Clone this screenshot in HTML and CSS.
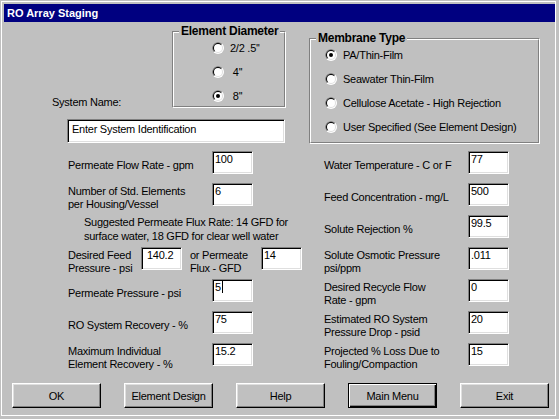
FILE: index.html
```html
<!DOCTYPE html>
<html>
<head>
<meta charset="utf-8">
<link rel="stylesheet" href="styles.css">
</head>
<body>
<svg class="defs" width="0" height="0">
  <symbol id="radio" viewBox="0 0 12 12">
    <circle cx="6" cy="6" r="6" fill="#fff"/>
    <path d="M1.757 10.243A6 6 0 0 1 10.243 1.757Z" fill="#808080"/>
    <circle cx="6" cy="6" r="5" fill="#dfdfdf"/>
    <path d="M2.464 9.536A5 5 0 0 1 9.536 2.464Z" fill="#000"/>
    <circle cx="6" cy="6" r="4" fill="#fff"/>
  </symbol>
  <symbol id="radio-on" viewBox="0 0 12 12">
    <use href="#radio"/>
    <circle cx="6" cy="6" r="2" fill="#000"/>
  </symbol>
</svg>
<div class="window">
  <div class="frame">
    <div class="titlebar">RO Array Staging</div>

    <div class="top">
      <div class="top-left">
        <div class="name-row">
          <div class="name-label">System Name:</div>
          <div class="group group-dia">
            <div class="group-in">
              <div class="legend">Element Diameter</div>
              <div class="opt opt-dia"><svg class="radio"><use href="#radio"/></svg><span>2/2 .5''</span></div>
              <div class="opt opt-dia"><svg class="radio"><use href="#radio"/></svg><span>&nbsp;4''</span></div>
              <div class="opt opt-dia"><svg class="radio"><use href="#radio-on"/></svg><span>&nbsp;8''</span></div>
            </div>
          </div>
        </div>
        <div class="edit edit-name">Enter System Identification</div>
      </div>
      <div class="group group-mem">
        <div class="group-in">
          <div class="legend">Membrane Type</div>
          <div class="opt opt-mem"><svg class="radio"><use href="#radio-on"/></svg><span>PA/Thin-Film</span></div>
          <div class="opt opt-mem"><svg class="radio"><use href="#radio"/></svg><span>Seawater Thin-Film</span></div>
          <div class="opt opt-mem"><svg class="radio"><use href="#radio"/></svg><span>Cellulose Acetate - High Rejection</span></div>
          <div class="opt opt-mem"><svg class="radio"><use href="#radio"/></svg><span>User Specified (See Element Design)</span></div>
        </div>
      </div>
    </div>

    <div class="fields">
      <div class="col col-left">
        <div class="row"><div class="lbl">Permeate Flow Rate - gpm</div><div class="edit">100</div></div>
        <div class="row"><div class="lbl">Number of Std. Elements<br>per Housing/Vessel</div><div class="edit">6</div></div>
        <div class="note">Suggested Permeate Flux Rate: 14 GFD for<br>surface water, 18 GFD for clear well water</div>
        <div class="row">
          <div class="lbl lbl-feed">Desired Feed<br>Pressure - psi</div><div class="edit edit-indent">140.2</div>
          <div class="lbl lbl-or">or Permeate<br>Flux - GFD</div><div class="edit">14</div>
        </div>
        <div class="row"><div class="lbl">Permeate Pressure - psi</div><div class="edit">5<span class="caret"></span></div></div>
        <div class="row"><div class="lbl">RO System Recovery - %</div><div class="edit">75</div></div>
        <div class="row"><div class="lbl">Maximum Individual<br>Element Recovery - %</div><div class="edit">15.2</div></div>
      </div>
      <div class="col col-right">
        <div class="row"><div class="lbl">Water Temperature - C or F</div><div class="edit">77</div></div>
        <div class="row"><div class="lbl">Feed Concentration - mg/L</div><div class="edit">500</div></div>
        <div class="row"><div class="lbl">Solute Rejection %</div><div class="edit">99.5</div></div>
        <div class="row"><div class="lbl">Solute Osmotic Pressure<br>psi/ppm</div><div class="edit">.011</div></div>
        <div class="row"><div class="lbl">Desired Recycle Flow<br>Rate - gpm</div><div class="edit">0</div></div>
        <div class="row"><div class="lbl">Estimated RO System<br>Pressure Drop - psid</div><div class="edit">20</div></div>
        <div class="row"><div class="lbl">Projected % Loss Due to<br>Fouling/Compaction</div><div class="edit">15</div></div>
      </div>
    </div>

    <div class="buttons">
      <button class="btn">OK</button>
      <button class="btn">Element Design</button>
      <button class="btn">Help</button>
      <button class="btn btn-default">Main Menu</button>
      <button class="btn">Exit</button>
    </div>
  </div>
</div>
</body>
</html>
```
FILE: styles.css
```css
html, body {
  margin: 0;
  padding: 0;
  background: #c0c0c0;
}
body {
  font-family: "Liberation Sans", Arial, sans-serif;
  font-size: 11px;
  letter-spacing: -0.25px;
  color: #000;
}
.defs {
  position: absolute;
  width: 0;
  height: 0;
  overflow: hidden;
}
.window {
  width: 559px;
  height: 419px;
  box-sizing: border-box;
  padding: 1px 3px 3px 1px;
  background: #c0c0c0;
}
.frame {
  height: 100%;
  box-sizing: border-box;
  border: 1px solid #fff;
  padding: 2px 0 0 2px;
}
.titlebar {
  height: 18px;
  line-height: 18px;
  background: #000080;
  color: #fff;
  font-weight: bold;
  letter-spacing: 0;
  padding-left: 3px;
}
.top {
  display: flex;
  align-items: flex-start;
}
.top-left {
  width: 305px;
  flex: none;
}
.name-row {
  display: grid;
  grid-template-columns: 168px 114px;
  margin-top: 9px;
}
.name-label {
  padding-left: 48px;
  align-self: end;
  margin-bottom: -1px;
  line-height: 13px;
}
.group {
  box-sizing: border-box;
  border: 1px solid;
  border-color: #808080 #fff #fff #808080;
}
.group-in {
  box-sizing: border-box;
  height: 100%;
  border: 1px solid;
  border-color: #fff #808080 #808080 #fff;
  display: flex;
  flex-direction: column;
}
.group-dia {
  height: 77px;
}
.group-mem {
  width: 231px;
  height: 106px;
  margin-top: 16px;
  flex: none;
}
.legend {
  align-self: flex-start;
  font-size: 12px;
  font-weight: bold;
  line-height: 14px;
  background: #c0c0c0;
  padding: 0 2px;
  margin: -9px 0 -2px 5px;
}
.opt {
  display: flex;
  align-items: center;
  gap: 6px;
  height: 24px;
  flex: none;
  line-height: 13px;
  white-space: nowrap;
}
.opt-dia {
  padding-left: 38px;
}
.opt-mem {
  padding-left: 14px;
}
.radio {
  width: 12px;
  height: 12px;
  flex: none;
  display: block;
}
.edit {
  box-sizing: border-box;
  width: 41px;
  height: 23px;
  flex: none;
  background: #fff;
  border: 1px solid;
  border-color: #808080 #fff #fff #808080;
  box-shadow: inset 1px 1px 0 #000, inset -1px -1px 0 #dfdfdf;
  padding: 1px 0 0 2px;
  line-height: 13px;
  white-space: nowrap;
}
.edit-indent {
  padding-left: 5px;
}
.edit-name {
  width: 218px;
  height: 24px;
  margin: 11px 0 0 63px;
  padding: 3px 0 0 4px;
}
.caret {
  display: inline-block;
  width: 1px;
  height: 12px;
  background: #000;
  vertical-align: -2px;
  margin-left: 1px;
}
.fields {
  display: flex;
  margin-top: 7px;
  padding-left: 64px;
}
.col {
  display: grid;
  grid-auto-rows: 23px;
  row-gap: 9px;
}
.col-left {
  width: 256px;
  flex: none;
}
.row {
  display: flex;
  align-items: center;
  height: 23px;
}
.lbl {
  width: 144px;
  flex: none;
  padding-top: 6px;
  line-height: 13px;
  white-space: nowrap;
}
.lbl-feed {
  width: 73px;
}
.lbl-or {
  width: 71px;
  margin-left: 8px;
}
.note {
  padding-left: 16px;
  line-height: 14px;
  white-space: nowrap;
  align-self: start;
}
.buttons {
  display: flex;
  gap: 23px;
  margin-top: 17px;
  padding-left: 8px;
}
.btn {
  box-sizing: border-box;
  width: 89px;
  height: 25px;
  padding: 0;
  margin: 0;
  font-family: "Liberation Sans", Arial, sans-serif;
  font-size: 11px;
  letter-spacing: -0.25px;
  color: #000;
  background: #c0c0c0;
  border: 1px solid;
  border-color: #fff #000 #000 #fff;
  box-shadow: inset -1px -1px 0 #808080, inset 1px 1px 0 #dfdfdf;
}
.btn-default {
  border: 1px solid #000;
  box-shadow: inset 1px 1px 0 #fff, inset -1px -1px 0 #000, inset -2px -2px 0 #808080;
}
```
